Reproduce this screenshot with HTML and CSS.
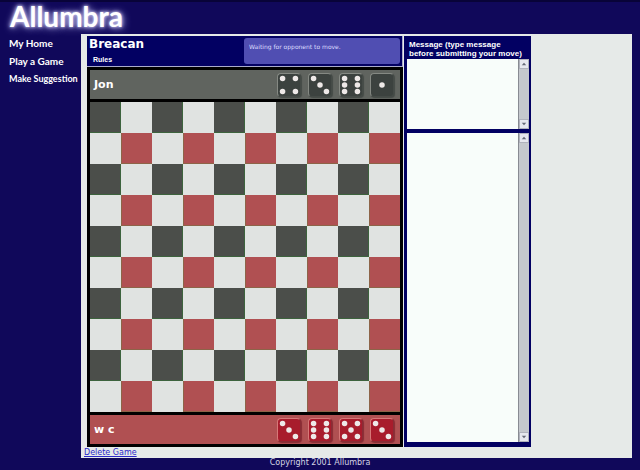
FILE: index.html
```html
<!DOCTYPE html>
<html lang="en">
<head>
<meta charset="utf-8">
<title>Allumbra</title>
<link rel="stylesheet" href="styles.css">
<script src="board.js" defer></script>
</head>

<body>
<h1 class="logo">Allumbra</h1>

<div class="page">
    <nav class="menu">
        <a href="#">My Home</a>
        <a href="#">Play a Game</a>
        <a href="#" class="small">Make Suggestion</a>
    </nav>

    <main class="content">
        <div class="table">
            <section class="game">
                <div class="gameHeader">
                    <div>
                        <h2>Breacan</h2>
                        <a class="rules" href="#">Rules</a>
                    </div>
                    <p class="status">Waiting for opponent to move.</p>
                </div>
                <div class="frame">
                    <div class="player gray">
                        <span>Jon</span>
                        <div class="dice" data-dice="4 3 6 1"></div>
                    </div>
                    <div class="board" id="board"></div>
                    <div class="player red">
                        <span>w c</span>
                        <div class="dice" data-dice="3 6 5 3"></div>
                    </div>
                </div>
            </section>

            <section class="chat">
                <label for="message">Message (type message<br>before submitting your move)</label>
                <div class="box short">
                    <textarea id="message"></textarea>
                    <div class="scroll">
                        <button type="button" aria-label="Scroll up"><svg viewBox="0 0 9 9"><path d="M2 6L4.500 3L7 6z"/></svg></button>
                        <button type="button" aria-label="Scroll down"><svg viewBox="0 0 9 9"><path d="M2 3L4.500 6L7 3z"/></svg></button>
                    </div>
                </div>
                <div class="box tall">
                    <textarea readonly aria-label="Message log"></textarea>
                    <div class="scroll">
                        <button type="button" aria-label="Scroll log up"><svg viewBox="0 0 9 9"><path d="M2 6L4.500 3L7 6z"/></svg></button>
                        <button type="button" aria-label="Scroll log down"><svg viewBox="0 0 9 9"><path d="M2 3L4.500 6L7 3z"/></svg></button>
                    </div>
                </div>
            </section>
        </div>
        <a class="delete" href="#">Delete Game</a>
    </main>
</div>

<footer>Copyright 2001 Allumbra</footer>
</body>
</html>
```
FILE: styles.css
```css
* {
    box-sizing: border-box;
}

body {
    margin: 0;
    background-color: #10085a;
    border-top: 2px solid #080338;
    font-family: "DejaVu Sans", Verdana, sans-serif;
    color: #fff;
}

h1, h2, p {
    margin: 0;
}

a {
    color: inherit;
    text-decoration: none;
}

.logo {
    height: 32px;
    padding-left: 10px;
    font: bold 28px/28px Lato, sans-serif;
    text-shadow: 0 0 3px #d0cdf0, 0 0 5px #a9a5e0, 1px 1px 8px #a9a5e0;
}

.page {
    display: flex;
    padding-right: 8px;
}

.menu {
    display: flex;
    flex-direction: column;
    flex: 0 0 81px;
    padding-left: 9px;
    font: bold 10px/18px Lato, sans-serif;
    white-space: nowrap;
}

.menu .small {
    font-size: 9px;
}

.content {
    flex: 1;
    padding: 2px 3px 0;
    background-color: #e6eae8;
}

.table {
    display: flex;
    gap: 1px;
    padding-left: 3px;
}

.game {
    flex: 0 0 316px;
    background-color: #a9aacb;
}

.gameHeader {
    display: flex;
    justify-content: space-between;
    height: 31px;
    margin-right: 1px;
    border-bottom: 1px solid #a9aacb;
    padding: 1px 2px 2px;
    background-color: #020062;
}

h2 {
    font-size: 12px;
    line-height: 14px;
}

.rules {
    display: block;
    padding-left: 4px;
    font: bold 7px/18px "Liberation Sans", Arial, sans-serif;
}

.status {
    width: 156px;
    margin-top: 1px;
    padding: 0 5px;
    border-radius: 3px;
    background-color: #504eb2;
    color: #dcdcff;
    font-size: 6px;
    line-height: 18px;
}

.frame {
    padding: 3px;
    background-color: #000;
}

.player {
    display: flex;
    align-items: center;
    justify-content: space-between;
    height: 29px;
    padding: 0 6px 0 4px;
    font-size: 11px;
    font-weight: bold;
}

.gray {
    background-color: #60645f;
    --die: #3c423f;
    --hi: #858983;
    --lo: #454b47;
}

.red {
    background-color: #b05052;
    --die: #a81c2c;
    --hi: #d77878;
    --lo: #8a2c35;
}

.dice {
    display: flex;
    gap: 7px;
}

.die {
    width: 24px;
    height: 24px;
    border: 1px solid;
    border-color: var(--hi) var(--lo) var(--lo) var(--hi);
    border-radius: 4px;
    background-color: var(--die);
    box-shadow: 1px 1px 1px var(--lo);
    fill: #eee9e8;
}

.board {
    display: grid;
    grid-template-columns: repeat(10, 1fr);
    margin: 3px 0;
}

.cell {
    height: 31px;
    background-color: #e0e3e1;
}

.cell.dark {
    border: 1px solid #3d633d;
    border-width: 0 1px 1px 0;
    background-color: #4b4e4a;
}

.cell.rose {
    border: 1px solid #8d6448;
    border-width: 0 0 1px 1px;
    background-color: #b05052;
}

.chat {
    flex: 0 0 127px;
    min-width: 0;
    display: flex;
    flex-direction: column;
    padding: 4px 2px 5px 3px;
    background-color: #020062;
}

.chat label {
    padding: 0 2px 1px;
    font: bold 8px/9px "Liberation Sans", Arial, sans-serif;
    white-space: nowrap;
}

.box {
    display: flex;
}

.box.short {
    height: 70px;
    margin-bottom: 4px;
}

.box.tall {
    flex: 1;
}

.box textarea {
    flex: 1;
    min-width: 0;
    padding: 2px;
    border: 0;
    background-color: #f8fdfa;
    font-size: 8px;
    resize: none;
}

.scroll {
    display: flex;
    flex-direction: column;
    justify-content: space-between;
    width: 11px;
    border-left: 1px solid #888b92;
    background-color: #c5c8cd;
}

.scroll button {
    height: 10px;
    padding: 0;
    border: 1px solid #b0b2bc;
    background-color: #e6e7ee;
}

.scroll svg {
    display: block;
    width: 8px;
    height: 8px;
    fill: #666977;
}

.delete {
    display: block;
    color: #2b28c8;
    font-size: 8px;
    line-height: 11px;
    text-decoration: underline;
}

footer {
    color: #d4d4e4;
    font-size: 8px;
    line-height: 10px;
    text-align: center;
}
```
FILE: board.js
```js
// pip positions on a 24x24 die
var PIPS = {
    1: [[12, 12]],
    3: [[5, 5], [12, 12], [19, 19]],
    4: [[5, 5], [19, 5], [5, 19], [19, 19]],
    5: [[5, 5], [19, 5], [12, 12], [5, 19], [19, 19]],
    6: [[5, 5], [19, 5], [5, 12], [19, 12], [5, 19], [19, 19]]
};

function drawBoard(board)
{
    for (var row = 0; row < 10; ++row) {
        for (var col = 0; col < 10; ++col) {
            var cell = document.createElement("div");
            cell.className = "cell";
            if ((row + col) % 2 == 0)
                cell.className += row % 2 ? " rose" : " dark";
            board.appendChild(cell);
        }
    }
}

function drawDice(holder)
{
    var html = "";
    holder.dataset.dice.split(" ").forEach(function(value) {
        html += '<svg class="die" viewBox="0 0 24 24">';
        PIPS[value].forEach(function(pip) {
            html += '<circle cx="' + pip[0] + '" cy="' + pip[1] + '" r="3"/>';
        });
        html += '</svg>';
    });
    holder.innerHTML = html;
}

drawBoard(document.getElementById("board"));
document.querySelectorAll(".dice").forEach(drawDice);
```
